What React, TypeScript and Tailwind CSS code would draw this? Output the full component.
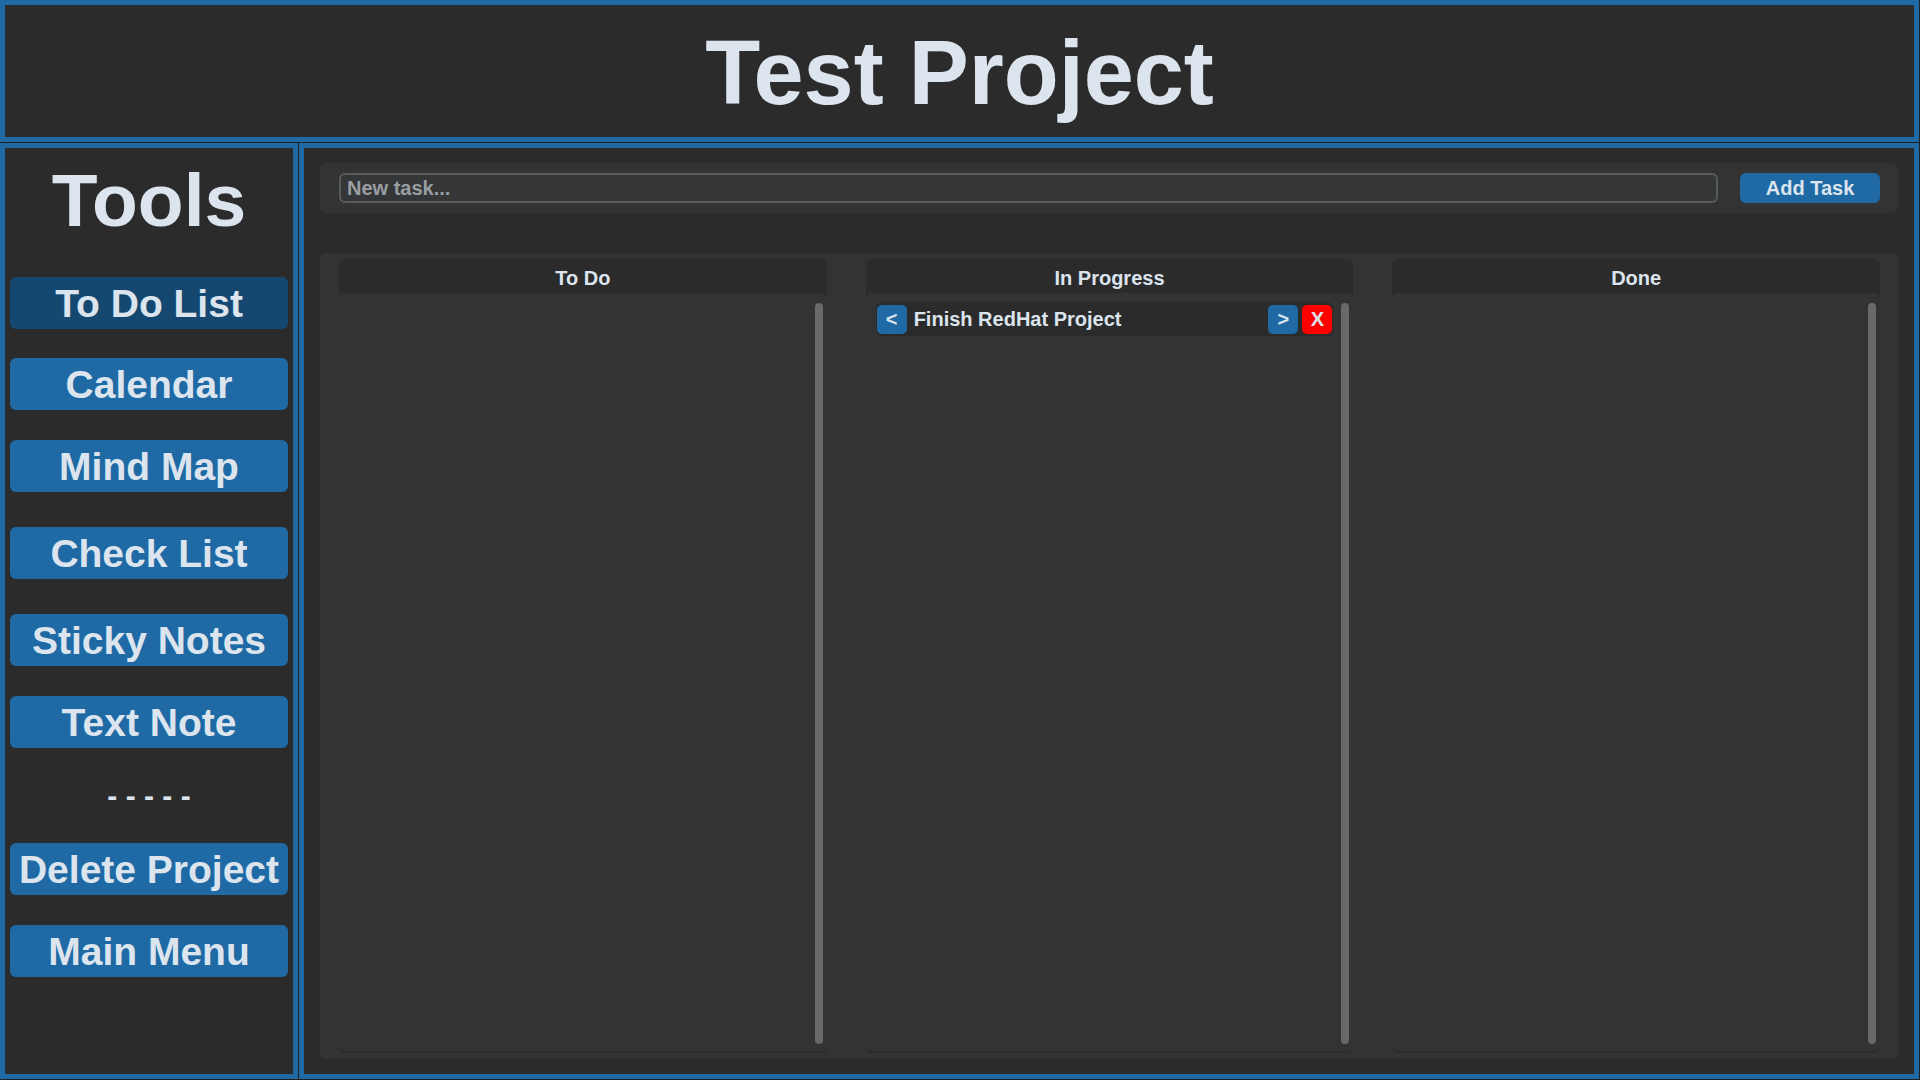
const blue = 'bg-[#1f6aa5]'

function SideButton({ label, active, mt }: { label: string; active?: boolean; mt: string }) {
  return (
    <button
      type="button"
      className={`${mt} mx-[5px] flex h-[52px] w-[278px] items-center justify-center whitespace-nowrap rounded-[6px] text-[39px] leading-none ${
        active ? 'bg-[#144870]' : blue
      }`}
    >
      {label}
    </button>
  )
}

function Column({ title, children }: { title: string; children?: React.ReactNode }) {
  return (
    <div className="flex min-w-0 flex-col rounded-[6px] bg-[#2b2b2b]">
      <div className="flex h-[34px] items-center justify-center pt-[4px] text-[20px]">{title}</div>
      <div className="mb-[2px] flex flex-1 rounded-[6px] bg-[#333333]">
        <div className="min-w-0 flex-1 pl-[10px] pr-[8px] pt-[9px]">{children}</div>
        <div className="mb-[7px] mr-[4px] mt-[10px] w-[8px] rounded-full bg-[#696969]" />
      </div>
    </div>
  )
}

function TaskRow({ text }: { text: string }) {
  return (
    <div className="flex h-[34px] items-center rounded-[6px] bg-[#2b2b2b] px-[1px]">
      <button type="button" className={`flex h-[29px] w-[30px] items-center justify-center rounded-[5px] ${blue} text-[20px]`}>
        &lt;
      </button>
      <span className="ml-[7px] flex-1 truncate text-[20px]">{text}</span>
      <button type="button" className={`flex h-[29px] w-[30px] items-center justify-center rounded-[5px] ${blue} text-[20px]`}>
        &gt;
      </button>
      <button type="button" className="ml-[4px] flex h-[29px] w-[30px] items-center justify-center rounded-[5px] bg-[#ff0000] text-[20px]">
        X
      </button>
    </div>
  )
}

export default function App() {
  return (
    <div className="flex h-[1080px] w-[1920px] flex-col bg-[#202020] font-['Liberation_Sans',Arial,sans-serif] font-bold text-[#dce4ee]">
      <header className="flex h-[142px] w-[1919px] items-center justify-center border-[5px] border-[#1f6aa5] bg-[#2b2b2b] pt-[4px]">
        <h1 className="text-[90px] leading-none">Test Project</h1>
      </header>

      <div className="mt-[1px] flex h-[936px] gap-[1px]">
        {/* sidebar */}
        <aside className="flex w-[298px] flex-col border-[5px] border-[#1f6aa5] bg-[#2b2b2b]">
          <div className="mt-[12px] flex h-[80px] items-center justify-center text-[75px] leading-none">Tools</div>
          <SideButton label="To Do List" active mt="mt-[37px]" />
          <SideButton label="Calendar" mt="mt-[29px]" />
          <SideButton label="Mind Map" mt="mt-[30px]" />
          <SideButton label="Check List" mt="mt-[35px]" />
          <SideButton label="Sticky Notes" mt="mt-[35px]" />
          <SideButton label="Text Note" mt="mt-[30px]" />
          <div className="flex h-[95px] items-center justify-center whitespace-pre text-[30px] leading-none">- - - - -</div>
          <SideButton label="Delete Project" mt="mt-0" />
          <SideButton label="Main Menu" mt="mt-[30px]" />
        </aside>

        {/* main board */}
        <main className="flex w-[1620px] flex-col border-[5px] border-[#1f6aa5] bg-[#2b2b2b]">
          <div className="mx-[16px] mt-[15px] flex h-[50px] items-center gap-[22px] rounded-[6px] bg-[#333333] pl-[19px] pr-[18px]">
            <div className="flex h-[30px] flex-1 items-center rounded-[6px] border-2 border-[#565b5e] bg-[#343638] px-[6px] text-[20px] text-[#9a9ea2]">
              New task...
            </div>
            <button type="button" className={`flex h-[30px] w-[140px] items-center justify-center rounded-[6px] ${blue} text-[20px]`}>
              Add Task
            </button>
          </div>

          <div className="mx-[16px] mb-[15px] mt-[40px] grid flex-1 grid-cols-3 gap-[39px] rounded-[6px] bg-[#333333] pb-[6px] pl-[19px] pr-[18px] pt-[6px]">
            <Column title="To Do" />
            <Column title="In Progress">
              <TaskRow text="Finish RedHat Project" />
            </Column>
            <Column title="Done" />
          </div>
        </main>
      </div>
    </div>
  )
}
